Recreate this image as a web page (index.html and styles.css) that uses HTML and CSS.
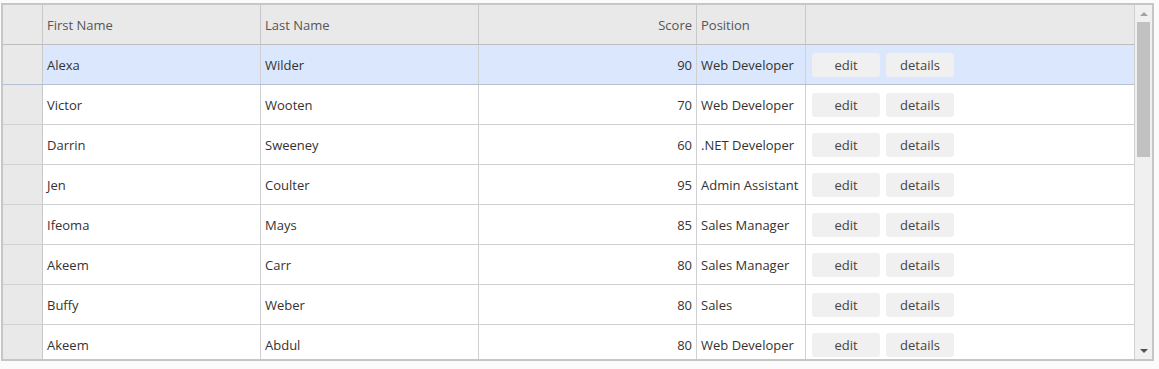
FILE: index.html
```html
<!DOCTYPE html>
<html>
<head>
<meta charset="utf-8">
<link rel="stylesheet" href="styles.css">
</head>
<body>
<div class="grid">
  <div class="viewport">
    <div class="row head">
      <div class="cell rh"></div>
      <div class="cell">First Name</div>
      <div class="cell">Last Name</div>
      <div class="cell num">Score</div>
      <div class="cell">Position</div>
      <div class="cell act"></div>
    </div>
    <div class="row sel">
      <div class="cell rh"></div>
      <div class="cell">Alexa</div>
      <div class="cell">Wilder</div>
      <div class="cell num">90</div>
      <div class="cell">Web Developer</div>
      <div class="cell act"><button class="btn">edit</button><button class="btn">details</button></div>
    </div>
    <div class="row">
      <div class="cell rh"></div>
      <div class="cell">Victor</div>
      <div class="cell">Wooten</div>
      <div class="cell num">70</div>
      <div class="cell">Web Developer</div>
      <div class="cell act"><button class="btn">edit</button><button class="btn">details</button></div>
    </div>
    <div class="row">
      <div class="cell rh"></div>
      <div class="cell">Darrin</div>
      <div class="cell">Sweeney</div>
      <div class="cell num">60</div>
      <div class="cell">.NET Developer</div>
      <div class="cell act"><button class="btn">edit</button><button class="btn">details</button></div>
    </div>
    <div class="row">
      <div class="cell rh"></div>
      <div class="cell">Jen</div>
      <div class="cell">Coulter</div>
      <div class="cell num">95</div>
      <div class="cell">Admin Assistant</div>
      <div class="cell act"><button class="btn">edit</button><button class="btn">details</button></div>
    </div>
    <div class="row">
      <div class="cell rh"></div>
      <div class="cell">Ifeoma</div>
      <div class="cell">Mays</div>
      <div class="cell num">85</div>
      <div class="cell">Sales Manager</div>
      <div class="cell act"><button class="btn">edit</button><button class="btn">details</button></div>
    </div>
    <div class="row">
      <div class="cell rh"></div>
      <div class="cell">Akeem</div>
      <div class="cell">Carr</div>
      <div class="cell num">80</div>
      <div class="cell">Sales Manager</div>
      <div class="cell act"><button class="btn">edit</button><button class="btn">details</button></div>
    </div>
    <div class="row">
      <div class="cell rh"></div>
      <div class="cell">Buffy</div>
      <div class="cell">Weber</div>
      <div class="cell num">80</div>
      <div class="cell">Sales</div>
      <div class="cell act"><button class="btn">edit</button><button class="btn">details</button></div>
    </div>
    <div class="row">
      <div class="cell rh"></div>
      <div class="cell">Akeem</div>
      <div class="cell">Abdul</div>
      <div class="cell num">80</div>
      <div class="cell">Web Developer</div>
      <div class="cell act"><button class="btn">edit</button><button class="btn">details</button></div>
    </div>
  </div>
  <div class="scrollbar">
    <div class="arrow up"></div>
    <div class="track"><div class="thumb"></div></div>
    <div class="arrow down"></div>
  </div>
</div>
</body>
</html>
```

FILE: styles.css
```css
html, body {
  margin: 0;
  padding: 0;
  background: #fbfbfb;
}
body {
  padding: 3px 0 0 1px;
  font-family: "Open Sans", "Noto Sans", sans-serif;
  font-size: 13px;
  color: #333;
}
.grid {
  width: 1153px;
  height: 358px;
  box-sizing: border-box;
  border: 2px solid #c6c6c6;
  display: flex;
  background: #fff;
}
.viewport {
  width: 1131px;
  overflow: hidden;
  display: flex;
  flex-direction: column;
}
.row {
  display: grid;
  grid-template-columns: 40px 218px 218px 218px 109px 1fr;
  height: 40px;
  flex: none;
  box-sizing: border-box;
  border-bottom: 1px solid #d0d0d0;
  background: #fff;
}
.row.head {
  background: #e9e9e9;
  border-bottom-color: #bdbdbd;
  color: #555;
}
.row.sel {
  background: #dae7fd;
  border-bottom-color: #b3c0d3;
}
.cell {
  box-sizing: border-box;
  border-right: 1px solid #d0d0d0;
  padding: 0 4px;
  display: flex;
  align-items: center;
  white-space: nowrap;
  overflow: hidden;
}
.row.head .cell {
  border-right-color: #c8c8c8;
}
.cell.num {
  justify-content: flex-end;
}
.cell.rh {
  background: #e9e9e9;
  border-right-color: #c8c8c8;
}
.cell.act {
  border-right: none;
  padding-left: 6px;
  gap: 6px;
}
.btn {
  width: 68px;
  height: 24px;
  border: none;
  border-radius: 3px;
  background: #f0f0f0;
  font-family: inherit;
  font-size: 13px;
  color: #444;
  padding: 0;
}
.scrollbar {
  width: 18px;
  box-sizing: border-box;
  border-left: 1px solid #d0d0d0;
  background: #f0f0f0;
  display: flex;
  flex-direction: column;
}
.arrow {
  height: 17px;
  flex: none;
  display: flex;
  align-items: center;
  justify-content: center;
}
.arrow::before {
  content: "";
  width: 0;
  height: 0;
  border-left: 4px solid transparent;
  border-right: 4px solid transparent;
}
.arrow.up::before {
  border-bottom: 4px solid #a3a3a3;
}
.arrow.down::before {
  border-top: 4px solid #505050;
}
.track {
  flex: 1;
  padding: 0 2px;
}
.thumb {
  height: 135px;
  background: #c1c1c1;
}
```
